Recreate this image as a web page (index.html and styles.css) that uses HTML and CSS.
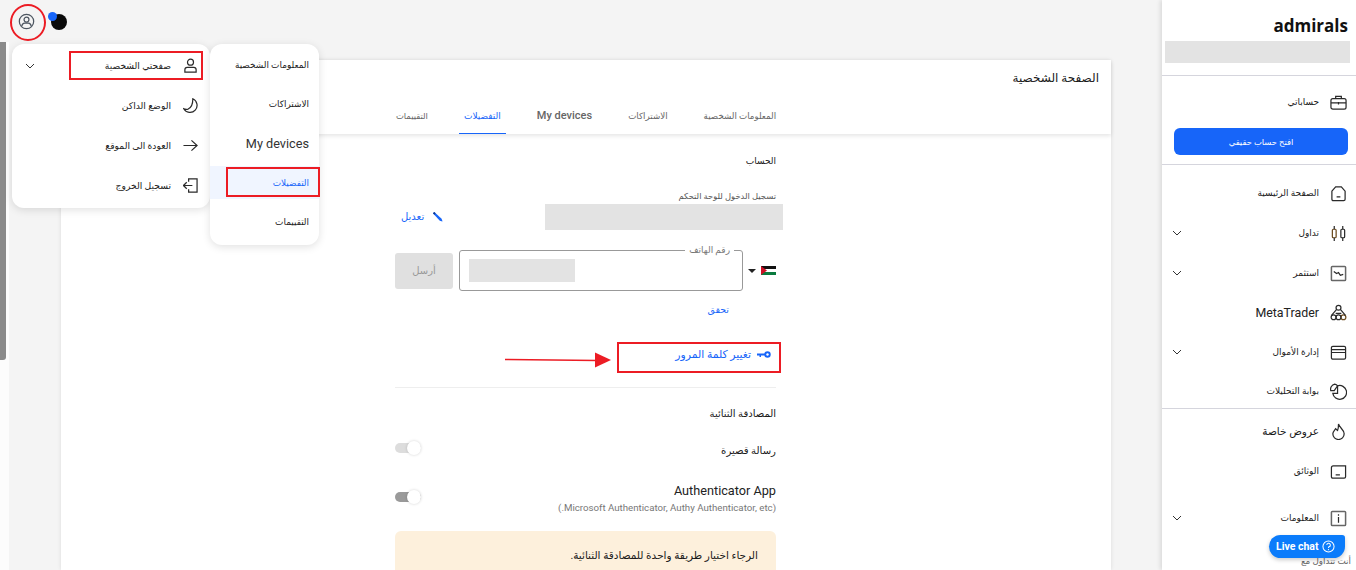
FILE: index.html
```html
<!DOCTYPE html>
<html lang="ar">
<head>
<meta charset="utf-8">
<title>الصفحة الشخصية</title>
<link rel="stylesheet" href="styles.css">
</head>
<body>
<div class="page">
  <div class="rail"><div class="thumb"></div></div>

  <main class="main">
    <section class="panel" dir="rtl">
      <header class="panel-head">
        <h1 class="page-title">الصفحة الشخصية</h1>
        <nav class="tabs">
          <a class="tab">المعلومات الشخصية</a>
          <a class="tab">الاشتراكات</a>
          <a class="tab tab-latin">My devices</a>
          <a class="tab tab-active">التفضيلات</a>
          <a class="tab tab-narrow">التقييمات</a>
        </nav>
      </header>

      <div class="form">
        <h2 class="section-title account-title">الحساب</h2>
        <div class="field-label">تسجيل الدخول للوحة التحكم</div>
        <div class="login-row">
          <div class="masked login-mask"></div>
          <a class="link edit-link">
            <svg class="icon-pencil" viewBox="0 0 12 12"><path d="M1 2.5 L2.5 1 L10.5 8.5 L11.5 11.5 L8.5 10.5 Z" fill="#1765f9"/><path d="M1 2.5 L2.5 1 L4 2.5 L2.5 4 Z" fill="#123a8c"/></svg>
            تعديل
          </a>
        </div>

        <div class="phone-row">
          <svg class="flag" viewBox="0 0 15 9"><rect width="15" height="3" fill="#111"/><rect y="3" width="15" height="3" fill="#fff"/><rect y="6" width="15" height="3" fill="#0a7a3e"/><path d="M0 0 L6 4.5 L0 9 Z" fill="#ce1126"/></svg>
          <span class="caret"></span>
          <div class="phone-field">
            <span class="legend">رقم الهاتف</span>
            <div class="masked phone-mask"></div>
          </div>
          <button class="send">أرسل</button>
        </div>

        <a class="link verify">تحقق</a>

        <a class="link change-pass">
          <svg class="icon-key" viewBox="0 0 14 7"><circle cx="10.5" cy="3.5" r="3.2" fill="#1765f9"/><circle cx="10.5" cy="3.5" r="1.2" fill="#fff"/><path d="M0 2.5 H8 V4.5 H4 V6 H2.5 V4.5 H0 Z" fill="#1765f9"/></svg>
          تغيير كلمة المرور
        </a>

        <div class="divider"></div>

        <h2 class="section-title two-factor">المصادقة الثنائية</h2>

        <div class="toggle-row sms-row">
          <div class="toggle-text">رسالة قصيرة</div>
          <div class="toggle toggle-light"><span class="knob"></span></div>
        </div>

        <div class="toggle-row app-row">
          <div class="toggle-text">
            <div class="app-name">Authenticator App</div>
            <div class="app-sub">(Microsoft Authenticator, Authy Authenticator, etc.)</div>
          </div>
          <div class="toggle toggle-dark"><span class="knob"></span></div>
        </div>

        <div class="notice">الرجاء اختيار طريقة واحدة للمصادقة الثنائية.</div>
      </div>
    </section>
  </main>

  <aside class="sidebar" dir="rtl">
    <div class="logo">admirals</div>
    <div class="masked side-mask"></div>
    <div class="side-rule rule-top"></div>

    <a class="side-item item-account">
      <svg class="side-icon" viewBox="0 0 18 16"><rect x="1" y="4" width="16" height="11" rx="2" class="ln"/><path d="M6 4 V1.5 H12 V4 M1 8.5 H17 M9 7.5 V10" class="ln"/></svg>
      <span class="side-text">حساباتي</span>
    </a>
    <button class="open-real">افتح حساب حقيقي</button>
    <div class="side-rule rule-mid"></div>

    <div class="side-list">
      <a class="side-item">
        <svg class="side-icon" viewBox="0 0 18 18"><path d="M2 6.5 L6 2 H12 L16 6.5 V15 Q16 16.5 14.5 16.5 H3.5 Q2 16.5 2 15 Z M7 12.5 H11" class="ln"/></svg>
        <span class="side-text">الصفحة الرئيسية</span>
      </a>
      <a class="side-item">
        <svg class="side-icon" viewBox="0 0 18 18"><rect x="2.5" y="4.5" width="4" height="9" rx="1" class="ln orange"/><rect x="11.5" y="4.5" width="4" height="9" rx="1" class="ln"/><path d="M4.5 1 V4.5 M4.5 13.5 V17 M13.5 1 V4.5 M13.5 13.5 V17" class="ln"/></svg>
        <span class="side-text">تداول</span>
        <svg class="chev" viewBox="0 0 10 6"><path d="M1 1 L5 5 L9 1" class="ln thin"/></svg>
      </a>
      <a class="side-item">
        <svg class="side-icon" viewBox="0 0 18 18"><rect x="1.5" y="1.5" width="15" height="15" rx="1" class="ln grey"/><path d="M4 7 L7 9 L9 8 L11 11 L14 10" class="ln"/></svg>
        <span class="side-text">استثمر</span>
        <svg class="chev" viewBox="0 0 10 6"><path d="M1 1 L5 5 L9 1" class="ln thin"/></svg>
      </a>
      <a class="side-item item-meta">
        <svg class="side-icon" viewBox="0 0 18 18"><circle cx="9" cy="4" r="2.6" class="ln"/><circle cx="3.8" cy="14" r="2.6" class="ln"/><circle cx="14.2" cy="14" r="2.6" class="ln orange"/><circle cx="9" cy="14" r="2.6" class="ln"/><path d="M6.8 6 L1.6 12 M11.2 6 L16.4 12 M6 10 H12" class="ln"/></svg>
        <span class="side-text side-latin">MetaTrader</span>
      </a>
      <a class="side-item">
        <svg class="side-icon" viewBox="0 0 18 18"><rect x="1.5" y="2.5" width="15" height="13.5" rx="1.5" class="ln"/><path d="M1.5 6 H16.5 M1.5 9 H16.5" class="ln"/></svg>
        <span class="side-text">إدارة الأموال</span>
        <svg class="chev" viewBox="0 0 10 6"><path d="M1 1 L5 5 L9 1" class="ln thin"/></svg>
      </a>
      <a class="side-item item-analytics">
        <svg class="side-icon" viewBox="0 0 18 18"><path d="M8 3 A7.3 7.3 0 1 1 3 11 H8 Z" class="ln"/><path d="M0.8 8 A5.5 5.5 0 0 1 5 1.2 Q7 1.5 8 3 L4.5 8 Z" class="ln"/></svg>
        <span class="side-text">بوابة التحليلات</span>
      </a>
      <div class="side-rule rule-low"></div>
      <a class="side-item">
        <svg class="side-icon" viewBox="0 0 18 18"><path d="M9 1 C10 5 15 7 15 11.5 A6 6 0 0 1 3 11.5 C3 9 5 7.5 6 6 C7 7 7.5 8 8 8 C9 6 9 3 9 1 Z" class="ln"/></svg>
        <span class="side-text side-wide">عروض خاصة</span>
      </a>
      <a class="side-item">
        <svg class="side-icon" viewBox="0 0 18 18"><path d="M1.5 5 Q1.5 3 3.5 3 H16.5 V14.5 Q16.5 16 15 16 H3 Q1.5 16 1.5 14.5 Z M6 12.5 H10.5" class="ln"/></svg>
        <span class="side-text">الوثائق</span>
      </a>
      <a class="side-item item-info">
        <svg class="side-icon" viewBox="0 0 18 18"><rect x="1.5" y="1.5" width="15" height="15" rx="1" class="ln grey"/><path d="M9 7.5 V13.5 M9 4.5 V6" class="ln"/></svg>
        <span class="side-text">المعلومات</span>
        <svg class="chev" viewBox="0 0 10 6"><path d="M1 1 L5 5 L9 1" class="ln thin"/></svg>
      </a>
    </div>
    <div class="trade-with">أنت تتداول مع</div>
    <button class="live-chat" dir="ltr">Live chat
      <svg class="help" viewBox="0 0 14 14"><circle cx="7" cy="7" r="6" fill="none" stroke="#fff" stroke-width="1.1"/><path d="M5.2 5.5 A1.9 1.9 0 1 1 7.6 7.3 Q7 7.6 7 8.5" fill="none" stroke="#fff" stroke-width="1.1"/><circle cx="7" cy="10.3" r="0.7" fill="#fff"/></svg>
    </button>
  </aside>

  <div class="brand-dots"><span class="dot-black"></span><span class="dot-blue"></span></div>
  <svg class="user-btn" viewBox="0 0 18 18"><circle cx="9" cy="9" r="7.6" class="ln grey-dark"/><circle cx="9" cy="7" r="2.6" class="ln grey-dark"/><path d="M4 14 Q4.5 10.8 7 10.8 H11 Q13.5 10.8 14 14" class="ln grey-dark"/></svg>

  <div class="menu menu-main" dir="rtl">
    <a class="menu-row">
      <svg class="menu-icon" viewBox="0 0 16 16"><circle cx="8" cy="4.5" r="3.2" class="ln"/><path d="M2 15 V12.5 Q2 10 4.5 10 H11.5 Q14 10 14 12.5 V15 Z" class="ln"/></svg>
      <span>صفحتي الشخصية</span>
      <svg class="chev menu-chev" viewBox="0 0 10 6"><path d="M1 1 L5 5 L9 1" class="ln thin"/></svg>
    </a>
    <a class="menu-row">
      <svg class="menu-icon" viewBox="0 0 16 16"><path d="M10.5 0.8 A7.6 7.6 0 1 1 0.8 11.5 Q3 12.5 5.5 11.8 Q10.5 9.5 10.5 0.8 Z" class="ln"/></svg>
      <span>الوضع الداكن</span>
    </a>
    <a class="menu-row">
      <svg class="menu-icon" viewBox="0 0 16 16"><path d="M0.5 8 H15 M9 2.5 L15 8 L9 13.5" class="ln"/></svg>
      <span>العودة الى الموقع</span>
    </a>
    <a class="menu-row">
      <svg class="menu-icon" viewBox="0 0 16 16"><path d="M6 4 V1 H15 V15 H6 V12 M0.5 8 H10 M4 4.5 L0.5 8 L4 11.5" class="ln"/></svg>
      <span>تسجيل الخروج</span>
    </a>
  </div>

  <div class="menu menu-sub" dir="rtl">
    <a class="sub-row">المعلومات الشخصية</a>
    <a class="sub-row">الاشتراكات</a>
    <a class="sub-row sub-latin">My devices</a>
    <a class="sub-row sub-active">التفضيلات</a>
    <a class="sub-row">التقييمات</a>
  </div>

  <div class="mark mark-circle"></div>
  <div class="mark mark-profile"></div>
  <div class="mark mark-prefs"></div>
  <div class="mark mark-pass"></div>
  <svg class="mark-arrow" viewBox="0 0 106 16"><path d="M0 7.5 L92 8.5" stroke="#ec1c24" stroke-width="1.6" fill="none"/><path d="M90 0.5 L106 8 L90 15.5 Z" fill="#ec1c24"/></svg>
</div>
</body>
</html>
```

FILE: styles.css
```css
* { box-sizing: border-box; }
html, body { margin: 0; padding: 0; height: 100%; overflow: hidden; }
body { font-family: Roboto, "DejaVu Sans", sans-serif; color: #1a1a1a; background: #f4f4f4; }
a { text-decoration: none; color: inherit; }
h1, h2 { margin: 0; font-weight: 400; }
button { font-family: inherit; border: 0; }

.page { position: relative; display: flex; width: 1356px; height: 570px; overflow: hidden; }
.masked { background: #e3e3e3; }

.ln { fill: none; stroke: #2a2a2a; stroke-width: 1.3; }
.ln.thin { stroke-width: 1; stroke: #333; }
.ln.grey { stroke: #666; stroke-width: 1.6; }
.ln.orange { stroke: #6b4a1e; }
.ln.grey-dark { stroke: #4c5560; }

/* left scroll rail */
.rail { width: 9px; flex: none; margin-top: 42px; background: #fcfcfc; }
.thumb { width: 6px; height: 318px; background: #8a8a8a; border-bottom-right-radius: 3px; }

/* main */
.main { flex: 1; padding: 60px 51px 0 52px; background: #f4f4f4; }
.panel { background: #fff; height: 100%; box-shadow: 0 0 4px rgba(0,0,0,.1); }
.panel-head { height: 74px; padding: 10px 12px 0; box-shadow: 0 2px 4px rgba(0,0,0,.1); display: flex; flex-direction: column; }
.page-title { font-size: 12px; line-height: 16px; }
.tabs { display: flex; justify-content: center; gap: 26px; margin-top: 19px; }
.tab { padding: 0 5px; height: 29px; line-height: 22px; font-size: 8.7px; color: #666; white-space: nowrap; }
.tab-latin { font-size: 11px; font-weight: 500; }
.tab-active { font-size: 9px; color: #1765f9; border-bottom: 1px solid #1765f9; }
.tab-narrow { font-size: 8.4px; }

.form { width: 381px; margin: 0 335px 0 334px; padding-top: 20px; }
.section-title { font-size: 10px; line-height: 14px; }
.account-title { font-size: 9px; }
.field-label { font-size: 8.4px; line-height: 14px; color: #555; margin-top: 21px; }
.login-row { display: flex; align-items: center; justify-content: space-between; margin-top: 1px; margin-right: -7px; }
.login-mask { width: 238px; height: 26px; }
.link { color: #1765f9; font-size: 10px; }
.edit-link { display: flex; align-items: center; gap: 8px; margin-left: -6px; padding-left: 12px; margin-bottom: 2px; }
.icon-pencil { width: 11px; height: 11px; }

.phone-row { display: flex; align-items: center; margin-top: 20px; height: 41px; }
.flag { width: 15px; height: 9px; flex: none; }
.caret { width: 0; height: 0; margin-right: 5px; border-left: 4px solid transparent; border-right: 4px solid transparent; border-top: 4px solid #222; flex: none; }
.phone-field { position: relative; width: 284px; height: 41px; margin-right: 5px; border: 1px solid #999; border-radius: 3px; display: flex; align-items: center; justify-content: flex-end; padding-left: 9px; flex: none; }
.legend { position: absolute; top: -7px; right: 8px; padding: 0 4px; background: #fff; font-size: 9px; line-height: 12px; color: #777; }
.phone-mask { width: 106px; height: 23px; }
.send { width: 58px; height: 36px; margin-right: 6px; border-radius: 3px; background: #e0e0e0; color: #999; font-size: 10px; flex: none; }

.verify { display: block; font-size: 9.5px; line-height: 14px; margin-top: 12px; margin-right: 47px; }
.change-pass { display: flex; align-items: center; gap: 6px; margin-top: 30px; margin-right: 5px; height: 14px; font-size: 10.8px; }
.icon-key { width: 14px; height: 7px; }
.divider { height: 1px; background: #eee; margin-top: 26px; }
.two-factor { margin-top: 19px; }

.toggle-row { display: flex; justify-content: space-between; align-items: flex-start; }
.sms-row { margin-top: 23px; }
.toggle-text { font-size: 10.1px; line-height: 14px; }
.app-row { margin-top: 25px; }
.app-name { font-size: 12.7px; line-height: 16px; color: #222; }
.app-sub { font-size: 9.7px; line-height: 14px; color: #777; margin-top: 2px; }
.toggle { position: relative; width: 26px; height: 10px; border-radius: 5px; }
.toggle-light { background: #ddd; margin-top: -1px; }
.toggle-dark { background: #9a9a9a; margin-top: 9px; }
.knob { position: absolute; left: 12px; top: -2px; width: 14px; height: 14px; border-radius: 50%; background: #fff; box-shadow: 0 0 3px rgba(0,0,0,.18); }
.notice { margin-top: 16px; padding: 18px 18px; height: 60px; background: #fdf0dc; border-radius: 6px; font-size: 10.5px; line-height: 14px; }

/* sidebar */
.sidebar { position: relative; width: 194px; flex: none; background: #fff; box-shadow: -2px 0 4px rgba(0,0,0,.1); padding-top: 14px; }
.logo { font-family: "Open Sans", Lato, sans-serif; direction: ltr; text-align: right; padding-right: 8px; font-size: 17px; line-height: 24px; font-weight: 700; color: #111; }
.side-mask { margin: 3px 6px 0 3px; height: 22px; }
.side-rule { height: 1px; background: #d5d5dd; }
.rule-top { margin-top: 12px; }
.side-item { display: flex; align-items: center; height: 40px; padding-right: 9px; font-size: 9px; position: relative; }
.item-account { margin-top: 6px; }
.side-icon { width: 17px; height: 17px; flex: none; }
.side-text { margin-right: 11px; white-space: nowrap; }
.side-latin { font-size: 12.4px; color: #222; }
.side-wide { font-size: 10.5px; }
.chev { width: 10px; height: 6px; }
.side-item .chev { position: absolute; left: 10px; top: 17px; }
.open-real { display: block; width: 174px; height: 27px; margin: 6px 8px 9px auto; background: #1765f9; color: #fff; border-radius: 6px; font-size: 8.4px; }
.rule-mid { margin-bottom: 8px; }
.side-list { display: flex; flex-direction: column; }
.item-meta { margin-top: -1px; }
.item-analytics { margin-top: -1px; }
.item-info { margin-top: 7px; }
.rule-low { margin: -3px 0 2px; }
.trade-with { position: absolute; top: 555px; right: 5px; font-size: 8.8px; line-height: 12px; color: #666; }
.live-chat { position: absolute; top: 535px; left: 107px; width: 76px; height: 23px; padding: 0 6px 0 7px; display: flex; align-items: center; gap: 3px; background: #0b7cfb; color: #fff; font-size: 10.5px; font-weight: 700; border-radius: 12px 3px 12px 12px; box-shadow: 0 2px 4px rgba(0,0,0,.2); white-space: nowrap; }
.help { width: 13px; height: 13px; }

/* top-left controls & floating menus */
.brand-dots { position: absolute; left: 48px; top: 12px; width: 20px; height: 20px; }
.dot-black { position: absolute; left: 3px; top: 2px; width: 16px; height: 16px; border-radius: 50%; background: #0a0a0a; }
.dot-blue { position: absolute; left: 0; top: 0; width: 9px; height: 9px; border-radius: 50%; background: #1765f9; }
.user-btn { position: absolute; left: 18px; top: 13px; width: 17px; height: 17px; }

.menu { position: absolute; background: #fff; border-radius: 12px; box-shadow: 0 2px 8px rgba(0,0,0,.12); }
.menu-main { left: 12px; top: 44px; width: 198px; height: 164px; padding-top: 1px; }
.menu-row { display: flex; align-items: center; height: 40px; padding-right: 12px; font-size: 9.2px; color: #222; position: relative; }
.menu-icon { width: 15px; height: 15px; margin-left: 12px; flex: none; }
.menu-chev { position: absolute; left: 13px; top: 18px; }
.menu-sub { left: 210px; top: 44px; width: 109px; height: 201px; padding-top: 1px; }
.sub-row { display: flex; align-items: center; height: 39.4px; padding-right: 10px; font-size: 8.9px; color: #222; white-space: nowrap; }
.sub-latin { font-size: 12.7px; color: #333; }
.sub-active { background: #f0f5ff; color: #1765f9; height: 33px; margin: 3px 0; }

.mark { position: absolute; border: 2px solid #ec1c24; }
.mark-circle { left: 10px; top: 4px; width: 36px; height: 37px; border-radius: 50%; }
.mark-profile { left: 69px; top: 51px; width: 134px; height: 29px; }
.mark-prefs { left: 226px; top: 167px; width: 94px; height: 30px; }
.mark-pass { left: 617px; top: 342px; width: 164px; height: 31px; }
.mark-arrow { position: absolute; left: 505px; top: 352px; width: 106px; height: 16px; }
```
